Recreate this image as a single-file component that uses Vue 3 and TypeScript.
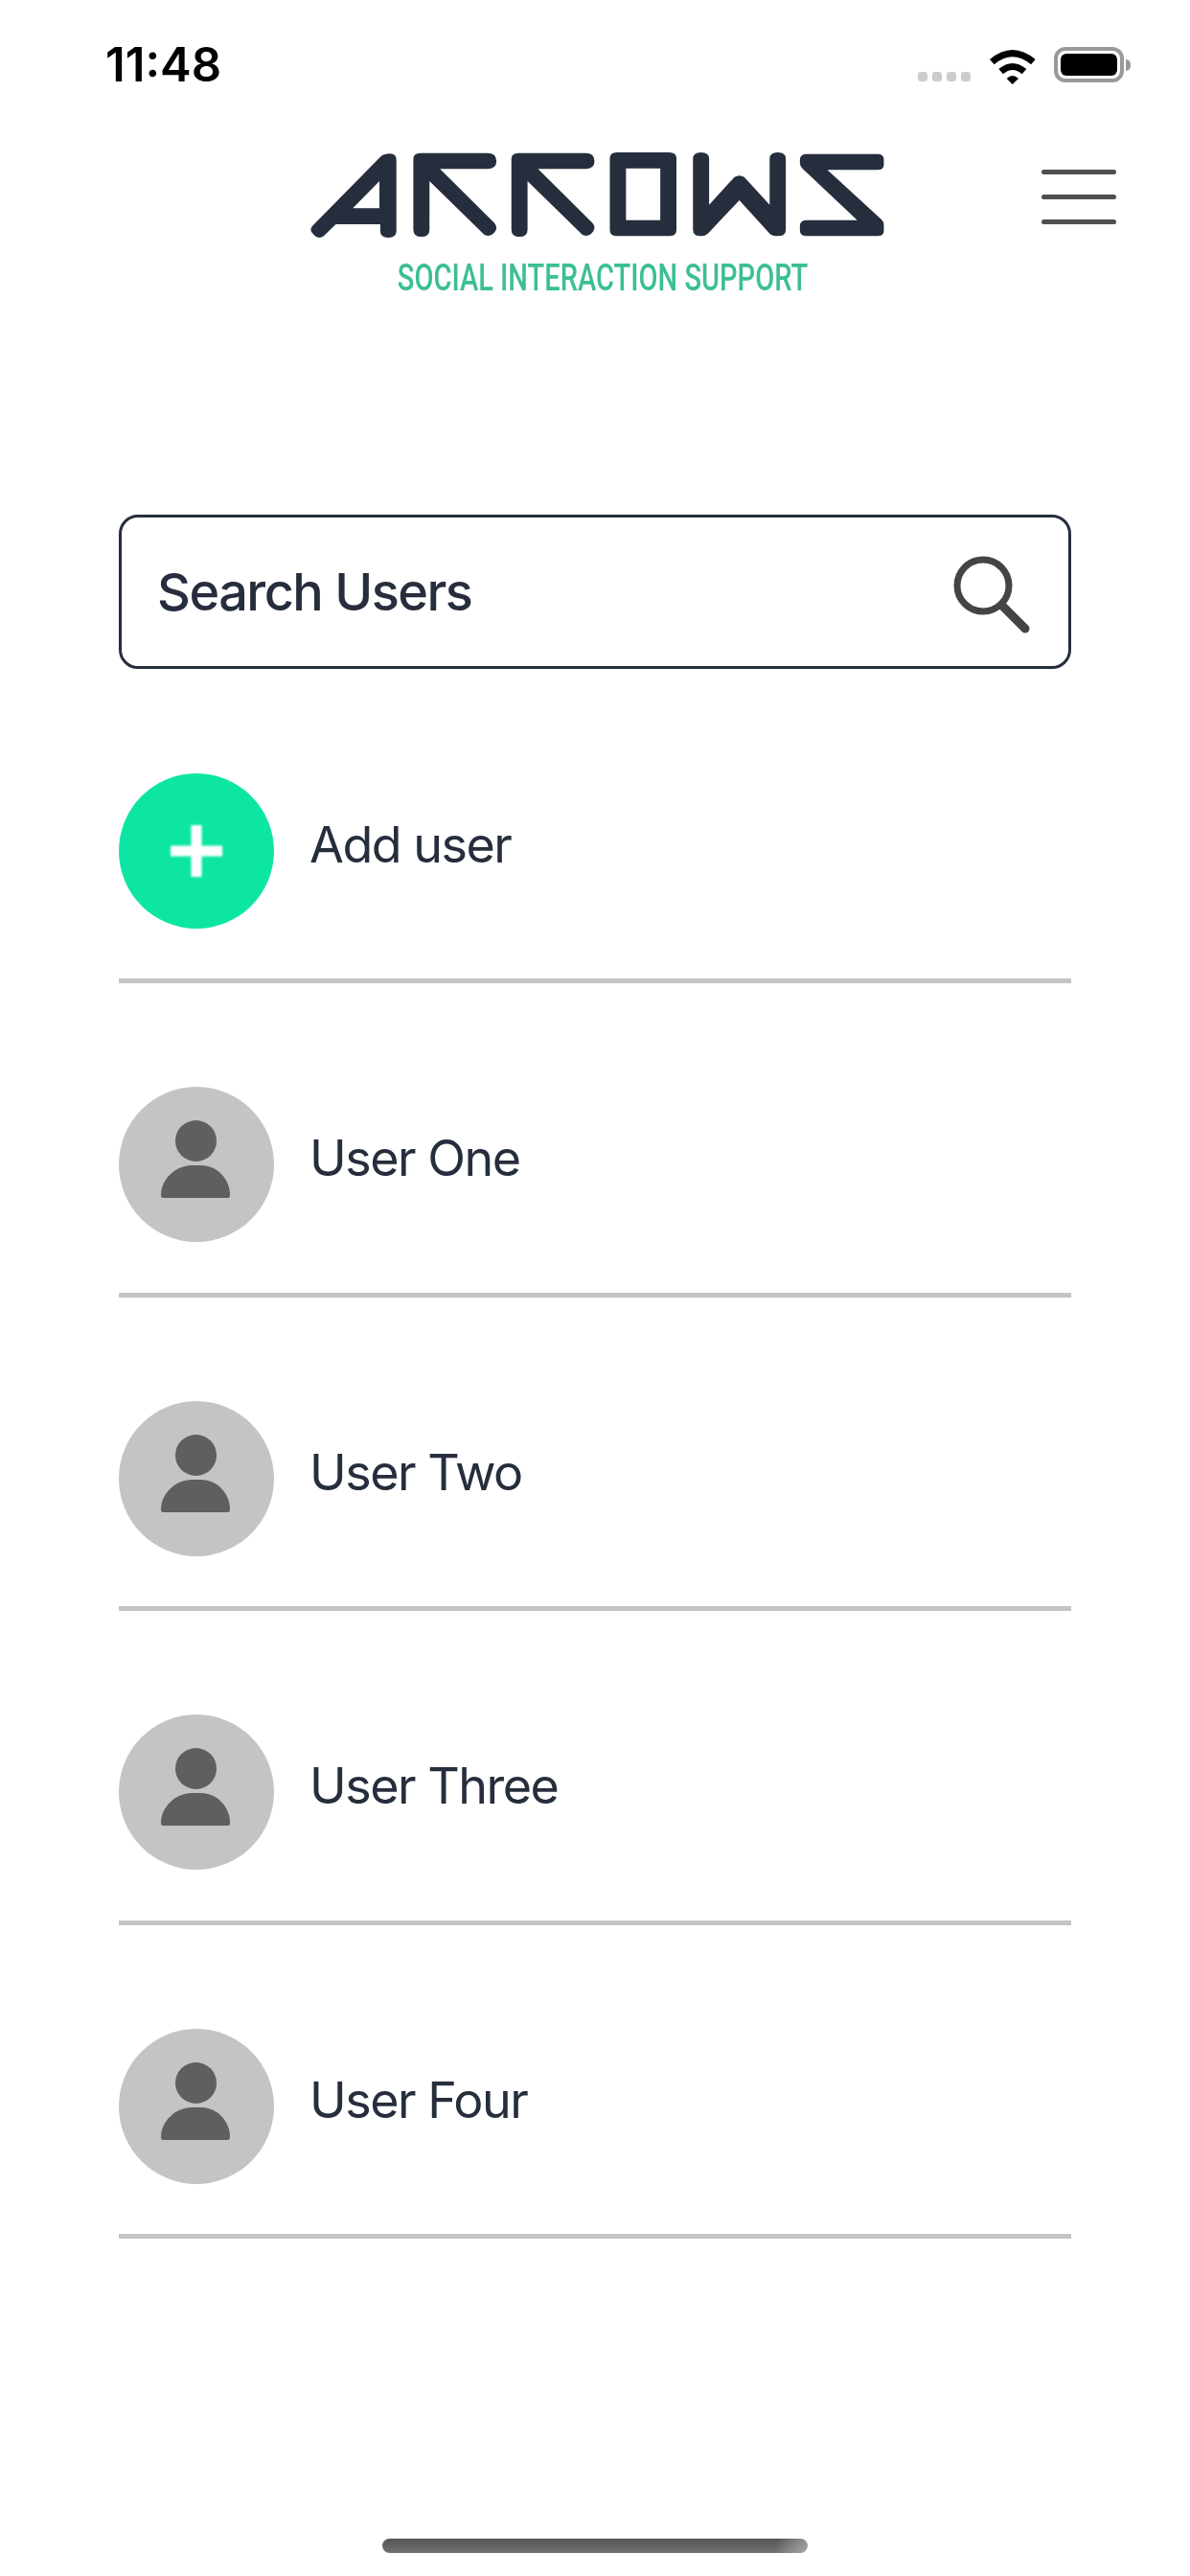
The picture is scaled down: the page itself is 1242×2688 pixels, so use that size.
<script setup lang="ts">
const users: string[] = ['User One', 'User Two', 'User Three', 'User Four']
</script>

<template>
  <div class="page">
    <div class="status">
      <span class="time">11:48</span>
      <div class="status-icons">
        <div class="dots"><i></i><i></i><i></i><i></i></div>
        <svg class="wifi" viewBox="275 49 144 117" width="48" height="39" aria-hidden="true">
          <path d="M275 88 Q346 28 418 88 L404 104 Q346 56 289 104 Z" />
          <path d="M303 118 Q346 82 390 118 L376 134 Q346 108 317 134 Z" />
          <path d="M328 148 Q346 130 365 148 L346 166 Z" />
        </svg>
        <div class="battery"><div class="battery-fill"></div></div>
        <div class="battery-nub"></div>
      </div>
    </div>

    <header class="header">
      <div class="brand">
        <svg class="logo" viewBox="0 40 1560 291" width="657" height="97" preserveAspectRatio="none" role="img" aria-label="Arrows logo">
          <path fill-rule="evenodd" d="M232 70 Q240 62 254 62 Q270 62 270 82 L270 305 Q270 325 250 325 Q230 325 230 305 L230 283 L120 283 L90 320 Q80 330 68 320 L60 308 Q55 298 62 288 Z M228 148 L228 233 L162 233 Z" />
          <path d="M330 60 L495 60 Q518 60 518 85 Q518 110 495 110 L378 110 L512 278 Q522 292 515 305 Q505 325 488 316 L352 148 L352 300 Q352 322 332 322 Q312 322 312 300 L312 78 Q312 60 330 60 Z" />
          <path transform="translate(243 0)" d="M330 60 L495 60 Q518 60 518 85 Q518 110 495 110 L378 110 L512 278 Q522 292 515 305 Q505 325 488 316 L352 148 L352 300 Q352 322 332 322 Q312 322 312 300 L312 78 Q312 60 330 60 Z" />
          <path fill-rule="evenodd" d="M817 58 L946 58 Q964 58 964 76 L964 302 Q964 320 946 320 L817 320 Q799 320 799 302 L799 76 Q799 58 817 58 Z M839 108 L839 270 L924 270 L924 108 Z" />
          <path d="M1025 58 Q1045 58 1045 78 L1045 222 L1108 135 Q1120 126 1132 135 L1195 222 L1195 78 Q1195 58 1215 58 Q1235 58 1235 78 L1235 300 Q1235 320 1215 320 Q1202 320 1195 312 L1120 208 L1042 312 Q1035 320 1025 320 Q1005 320 1005 300 L1005 78 Q1005 58 1025 58 Z" />
          <path d="M1288 63 L1462 63 Q1478 63 1478 80 L1478 96 Q1478 113 1462 113 L1338 113 L1472 268 Q1478 275 1478 285 L1478 303 Q1478 320 1462 320 L1288 320 Q1270 320 1270 303 L1270 287 Q1270 270 1288 270 L1412 270 L1276 108 Q1270 100 1270 92 L1270 80 Q1270 63 1288 63 Z" />
        </svg>
        <div class="tagline"><span>SOCIAL INTERACTION SUPPORT</span></div>
      </div>
      <button class="burger" type="button" aria-label="Menu"><i></i><i></i><i></i></button>
    </header>

    <div class="search">
      <span class="search-label">Search Users</span>
      <svg class="search-icon" viewBox="0 0 84 84" width="84" height="84" aria-hidden="true">
        <circle cx="33" cy="33" r="27" />
        <path d="M53 54 L77 78" />
      </svg>
    </div>

    <ul class="list">
      <li class="row">
        <div class="avatar avatar-add">
          <svg viewBox="0 0 162 162" width="162" height="162" aria-hidden="true">
            <g class="plus">
              <rect x="54" y="75.5" width="54" height="11" />
              <rect x="75.5" y="54" width="11" height="54" />
            </g>
          </svg>
        </div>
        <span class="row-label">Add user</span>
      </li>
      <li v-for="user in users" :key="user" class="row">
        <div class="avatar">
          <svg viewBox="0 0 162 162" width="162" height="162" aria-hidden="true">
            <circle cx="80.5" cy="56.5" r="21.5" />
            <path d="M46 116 Q44 116 44 113 C44 96 60 82 76 82 L86 82 C102 82 116 96 116 113 Q116 116 114 116 Z" />
          </svg>
        </div>
        <span class="row-label">{{ user }}</span>
      </li>
    </ul>

    <div class="home-bar"></div>
  </div>
</template>

<style>
html,
body {
  margin: 0;
  background: #fff;
}
</style>

<style scoped>
.page {
  width: 1242px;
  height: 2688px;
  display: flex;
  flex-direction: column;
  background: #fff;
  color: #262e3d;
  font-family: Inter, "Liberation Sans", sans-serif;
  overflow: hidden;
}

.status {
  height: 153px;
  flex: none;
  box-sizing: border-box;
  display: flex;
  justify-content: space-between;
  align-items: flex-start;
  padding: 40px 62px 0 110px;
}

.time {
  font-size: 49px;
  line-height: 56px;
  font-weight: 600;
  color: #000;
}

.status-icons {
  display: flex;
  align-items: flex-start;
  padding-top: 9px;
}

.dots {
  display: flex;
  gap: 5px;
  margin: 26px 20px 0 0;
}

.dots i {
  display: block;
  width: 10px;
  height: 10px;
  border-radius: 3px;
  background: #ccc;
}

.wifi {
  fill: #000;
  margin-right: 19px;
}

.battery {
  box-sizing: border-box;
  width: 73px;
  height: 37px;
  padding: 3px;
  border: 4px solid #999;
  border-radius: 12px;
  background: #fff;
}

.battery-fill {
  width: 100%;
  height: 100%;
  border-radius: 6px;
  background: #000;
}

.battery-nub {
  width: 5px;
  height: 12px;
  margin: 13px 0 0 2px;
  border-radius: 0 5px 5px 0;
  background: #999;
}

.header {
  height: 384px;
  flex: none;
  box-sizing: border-box;
  display: flex;
  align-items: flex-start;
  padding-left: 300px;
}

.brand {
  width: 660px;
  flex: none;
}

.logo {
  display: block;
  fill: #262e3d;
}

.tagline {
  display: flex;
  justify-content: center;
  margin: 18px 2px 0 0;
}

.tagline span {
  display: block;
  flex: none;
  font-family: Roboto, "Liberation Sans", sans-serif;
  font-size: 38px;
  line-height: 44px;
  font-weight: 500;
  color: #3bbf93;
  white-space: nowrap;
  transform: scaleX(0.765);
}

.burger {
  display: flex;
  flex-direction: column;
  gap: 21px;
  width: 78px;
  margin: 24px 0 0 127px;
  padding: 0;
  border: 0;
  background: none;
}

.burger i {
  display: block;
  width: 78px;
  height: 5px;
  border-radius: 3px;
  background: #4f4f4f;
}

.search {
  flex: none;
  box-sizing: border-box;
  display: flex;
  align-items: center;
  justify-content: space-between;
  height: 161px;
  margin: 0 124px;
  padding: 0 38px 0 37px;
  border: 3px solid #262e3d;
  border-radius: 20px;
}

.search-label {
  font-size: 54px;
  line-height: 60px;
  font-weight: 500;
  letter-spacing: -1.5px;
}

.search-icon {
  fill: none;
  stroke: #444;
  stroke-width: 7;
  stroke-linecap: round;
  margin-top: 4px;
}

.search-icon path {
  stroke-width: 9;
}

.list {
  list-style: none;
  margin: 109px 124px 0;
  padding: 0;
}

.row {
  display: flex;
  align-items: center;
  gap: 37px;
  padding-bottom: 52.4px;
  margin-bottom: 108px;
  border-bottom: 5px solid #c4c4c4;
}

.avatar {
  flex: none;
  width: 162px;
  height: 162px;
  border-radius: 50%;
  background: #c4c4c4;
  fill: #5f5f5f;
}

.avatar svg {
  display: block;
}

.avatar-add {
  background: #0de6a2;
  fill: #fff;
}

.plus {
  filter: blur(1px);
}

.row-label {
  font-size: 52px;
  line-height: 60px;
  padding-bottom: 12px;
  letter-spacing: -1.5px;
}

.home-bar {
  flex: none;
  width: 444px;
  height: 15px;
  margin: auto auto 24px;
  border-radius: 8px;
  background:
    linear-gradient(100deg, rgba(255, 255, 255, 0) 92%, rgba(255, 255, 255, 0.4) 100%),
    linear-gradient(180deg, #555, #707070);
}
</style>
